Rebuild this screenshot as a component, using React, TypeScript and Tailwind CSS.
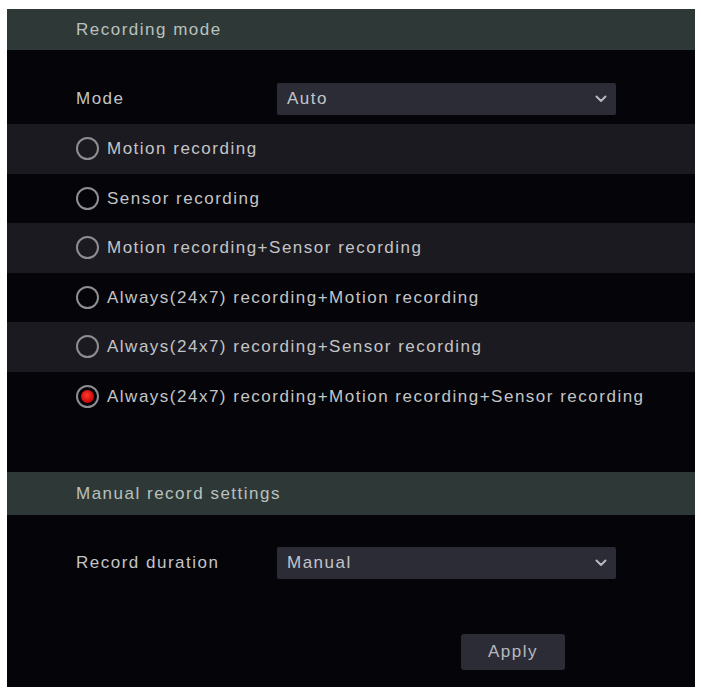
import React from "react";

const font = { fontFamily: '"Liberation Sans", Arial, sans-serif' };

function Chevron() {
  return (
    <svg width="12" height="8" viewBox="0 0 12 8" className="shrink-0">
      <path d="M1.5 1.5 L6 6 L10.5 1.5" fill="none" stroke="#b8b8c0" strokeWidth="2" strokeLinecap="round" strokeLinejoin="round" />
    </svg>
  );
}

function Select({ value }: { value: string }) {
  return (
    <div className="flex h-[32px] w-[339px] items-center justify-between rounded-[2px] bg-[#2c2c37] pl-[10px] pr-[9px] text-[17px] tracking-[1.5px] text-[#c4c4c8]">
      <span>{value}</span>
      <Chevron />
    </div>
  );
}

function Radio({ checked }: { checked?: boolean }) {
  return (
    <div className="flex h-[23px] w-[23px] shrink-0 items-center justify-center rounded-full border-2 border-[#8e8e92]">
      {checked && (
        <div className="h-[13px] w-[13px] rounded-full bg-[radial-gradient(circle_at_45%_40%,#ff3a2a,#d10c0c_60%,#9a0808)]" />
      )}
    </div>
  );
}

const options = [
  "Motion recording",
  "Sensor recording",
  "Motion recording+Sensor recording",
  "Always(24x7) recording+Motion recording",
  "Always(24x7) recording+Sensor recording",
  "Always(24x7) recording+Motion recording+Sensor recording",
];

export default function App() {
  return (
    <div className="h-[690px] w-[701px] bg-white pt-[9px] pl-[7px] pr-[6px] pb-[3px]" style={font}>
      <div className="flex h-[678px] w-[688px] flex-col bg-[#040409] text-[17px] tracking-[1.5px] text-[#c4c4c6]">
        <div className="flex h-[41px] shrink-0 items-center bg-[#2e3937] pl-[69px] text-[#b9c1be]">
          Recording mode
        </div>
        <div className="flex shrink-0 items-center pt-[33px] pb-[9px] pl-[69px]">
          <div className="w-[201px]">Mode</div>
          <Select value="Auto" />
        </div>
        {options.map((o, i) => (
          <div
            key={o}
            className={`flex h-[49.5px] shrink-0 items-center gap-[8px] pl-[69px] ${i % 2 === 0 ? "bg-[#1b1a20]" : ""}`}
          >
            <Radio checked={i === 5} />
            <span>{o}</span>
          </div>
        ))}
        <div className="h-[51px] shrink-0" />
        <div className="flex h-[43px] shrink-0 items-center bg-[#2e3937] pl-[69px] text-[#b9c1be]">
          Manual record settings
        </div>
        <div className="flex shrink-0 items-center pt-[32px] pl-[69px]">
          <div className="w-[201px]">Record duration</div>
          <Select value="Manual" />
        </div>
        <div className="flex shrink-0 pt-[55px] pl-[454px]">
          <div className="flex h-[36px] w-[104px] items-center justify-center rounded-[3px] bg-[#2c2c37] text-[#b8b8be]">
            Apply
          </div>
        </div>
      </div>
    </div>
  );
}
